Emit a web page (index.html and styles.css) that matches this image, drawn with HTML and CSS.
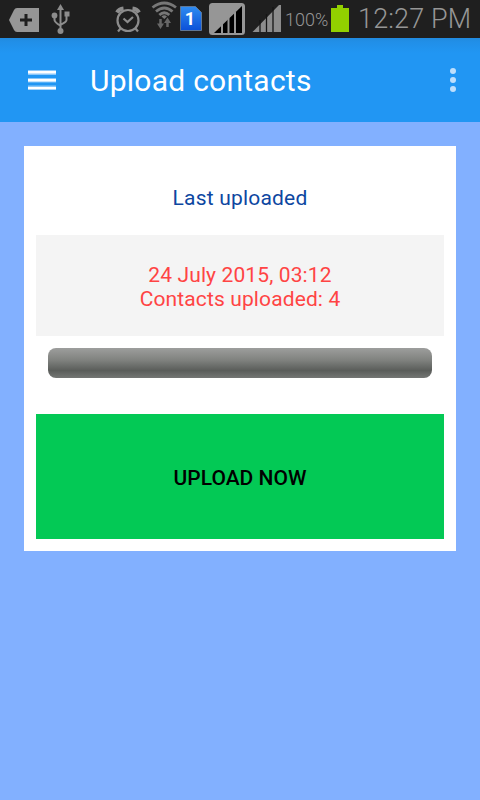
FILE: index.html
```html
<!DOCTYPE html>
<html lang="en">
<head>
<meta charset="utf-8">
<title>Upload contacts</title>
<link rel="stylesheet" href="styles.css">
</head>
<body>
<div class="screen">
  <div class="status">
    <svg width="45" height="38" viewBox="0 0 45 38"><path fill="#969696" d="M17 8H39V32H17Q15 32 14 30L9 20L14 10Q15 8 17 8Z"/><path d="M26 14V26M20 20H32" stroke="#1f1f1f" stroke-width="3"/></svg>
    <svg width="35" height="38" viewBox="45 0 35 38" fill="none" stroke="#8c8c8c" stroke-width="2"><path d="M60.500 8V31M54.500 16V20Q54.500 22 60 25.500M66.500 14V20Q66.500 22 61 24.500"/><g fill="#8c8c8c" stroke="none"><path d="M60.500 4L64 10H57Z"/><circle cx="54.500" cy="15.500" r="2.900"/><path d="M64.500 11.500H69.500V16.500H64.500Z"/><circle cx="60.500" cy="31" r="3"/></g></svg>
    <svg width="65" height="38" viewBox="80 0 65 38" fill="none" stroke="#8c8c8c"><circle cx="128" cy="20.500" r="10.500" stroke-width="2.200"/><path stroke-width="2.200" d="M123.500 18.500L127.500 22L133 17M120.500 28.500L118 31.500M135.500 28.500L138 31.500"/><path stroke-width="4" d="M117 12.500Q119 9 123.500 8.500M139 12.500Q137 9 132.500 8.500"/></svg>
    <svg width="34" height="38" viewBox="145 0 34 38" fill="none" stroke="#777" stroke-width="2.800"><path d="M152.500 7.500Q164.300-1.500 176 7.500"/><path d="M156 11.500Q164.300 4.500 172.500 11.500"/><path d="M159.300 15Q164.300 10.500 169.300 15"/><path d="M161.500 16.500Q164.300 14 167 16.500L164.300 19Z" fill="#777" stroke="none"/><g stroke="#686868" stroke-width="2.500"><path d="M160.500 19V25M167.500 27V21"/></g><path fill="#686868" stroke="none" d="M157 23.500H164L160.500 29ZM164 23H171L167.500 17.500Z"/></svg>
    <span class="sim"><svg width="22" height="26" viewBox="0 0 22 26"><defs><linearGradient id="sim" x2="0" y2="1"><stop stop-color="#2f8cf0"/><stop offset="1" stop-color="#0b50d8"/></linearGradient></defs><path d="M.5 .5H15.500L21.500 6.500V24.500H.5Z" fill="url(#sim)" stroke="#5f7795"/></svg><b>1</b></span>
    <svg width="44" height="38" viewBox="204 0 44 38"><rect x="209" y="3" width="36" height="32" rx="3.500" fill="#969696"/><path d="M214 33L242 6V33Z" fill="#000"/><path d="M222 24V33M228.500 18V33M235 12V33" stroke="#969696" stroke-width="2"/></svg>
    <svg width="36" height="38" viewBox="248 0 36 38"><path d="M252.500 32L279 5H281V32Z" fill="#8c8c8c"/><path d="M260 20V32M266.500 14V32M273 7V32" stroke="#151515" stroke-width="1.300"/></svg>
    <span class="percent">100%</span>
    <svg class="battery" width="18" height="38" viewBox="331 0 18 38"><path fill="#92d000" d="M331 8H337V5H343V8H349V32H331Z"/></svg>
    <span class="clock">12:27 PM</span>
  </div>
  <header class="bar">
    <svg width="28" height="20" viewBox="0 0 28 20"><path fill="#8ac7fa" d="M0 0H28V5H0ZM0 8H28V12.500H0ZM0 15.500H28V20H0Z"/><path fill="#fff" d="M0 1H28V3.500H0ZM0 9H28V11.500H0ZM0 17H28V19.300H0Z"/></svg>
    <h1>Upload contacts</h1>
    <svg class="more" width="6" height="24" viewBox="0 0 6 24" fill="#bedffc"><circle cx="3" cy="3" r="3"/><circle cx="3" cy="12" r="3"/><circle cx="3" cy="21" r="3"/></svg>
  </header>
  <main class="card">
    <p class="label">Last uploaded</p>
    <div class="info"><span class="date">24 July 2015, 03:12</span><span class="count">Contacts uploaded: 4</span></div>
    <div class="progress"></div>
    <button class="upload">UPLOAD NOW</button>
  </main>
</div>
</body>
</html>
```
FILE: styles.css
```css
* { box-sizing: border-box; }
body { margin: 0; font-family: Roboto, sans-serif; }
.screen { width: 480px; height: 800px; background: #82b0ff; overflow: hidden; }
.status { height: 38px; background: #1f1f1f; display: flex; color: #969696; white-space: nowrap; }
.status svg { flex: none; display: block; }
.sim { position: relative; width: 25px; flex: none; padding: 6px 0 0 1px; }
.sim b { position: absolute; left: 1px; top: 6px; width: 20px; line-height: 26px; text-align: center; color: #fff; font-size: 18px; }
.percent { width: 47px; flex: none; padding-left: 1px; font-size: 18px; font-weight: 300; line-height: 40px; }
.clock { margin-left: 9px; font-size: 27px; font-weight: 300; line-height: 38px; letter-spacing: .15px; }
.bar { height: 84px; background: linear-gradient(#218bdf 0, #218fe8 4px, #2196f3 15px); display: flex; align-items: center; padding: 0 24px 0 28px; }
h1 { margin: 2px 0 0 34px; color: #fff; font-size: 30px; font-weight: 400; line-height: 36px; letter-spacing: .25px; }
.more { margin-left: auto; }
.card { margin: 24px; padding: 12px; height: 405px; background: #fff; display: flex; flex-direction: column; text-align: center; font-size: 21px; }
.label { margin: 0; height: 77px; line-height: 81px; color: #0d47a1; letter-spacing: .2px; }
.info { height: 101px; padding-top: 28px; background: #f4f4f4; color: #ff4444; line-height: 24px; display: flex; flex-direction: column; letter-spacing: .12px; }
.progress { height: 30px; margin: 12px 12px 36px; border-radius: 8px; background: linear-gradient(#9d9e9d, #80827f 40%, #5a5d5a 75%, #747674); }
.upload { height: 125px; border: 0; padding: 3px 0 0; background: #03c955; color: #000; font: 500 21px Roboto, sans-serif; }
```
